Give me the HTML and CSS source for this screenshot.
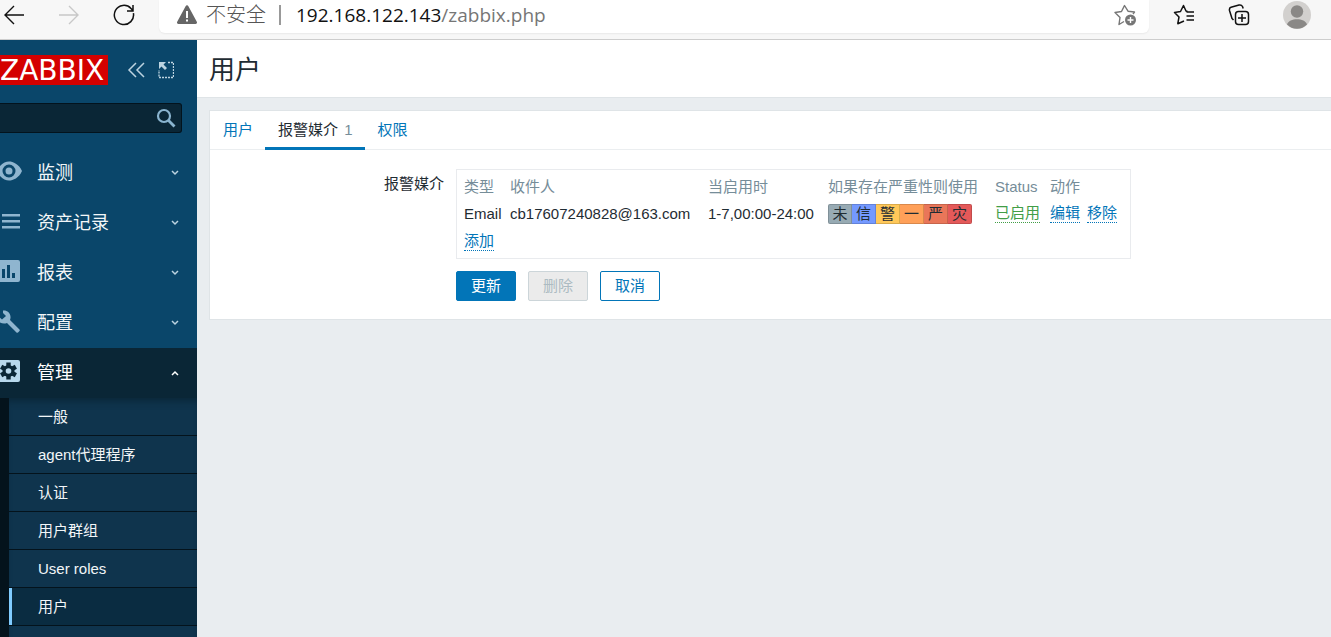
FILE: index.html
```html
<!DOCTYPE html>
<html lang="zh-CN">
<head>
    <meta charset="UTF-8">
    <meta name="viewport" content="width=device-width, initial-scale=1.0">
    <title>用户</title>
    <link rel="stylesheet" href="styles.css">
</head>
<body>
    <!-- Browser toolbar -->
    <header class="browser">
        <div class="browser-nav">
            <button type="button" aria-label="Back">
                <svg width="22" height="22" viewBox="0 0 22 22" fill="none" stroke="#111" stroke-width="1.4"><path d="M21 11H2M11 2L2 11l9 9"/></svg>
            </button>
            <button type="button" aria-label="Forward">
                <svg width="22" height="22" viewBox="0 0 22 22" fill="none" stroke="#c8c8c8" stroke-width="1.4"><path d="M1 11h19M11 2l9 9-9 9"/></svg>
            </button>
            <button type="button" aria-label="Refresh">
                <svg width="22" height="22" viewBox="0 0 22 22" fill="none" stroke="#111" stroke-width="1.5"><path d="M20.4 9.2A9.6 9.6 0 1 1 18 4.400l1.600 1.800M20 1v6h-6"/></svg>
            </button>
        </div>
        <div class="address">
            <svg width="22" height="20" viewBox="0 0 22 20"><path d="M9.6 1.2a1.6 1.6 0 0 1 2.8 0l8.4 15.6c.6 1-.1 2.2-1.3 2.2h-17c-1.2 0-1.9-1.2-1.3-2.2z" fill="#666"/><path d="M10 6h2v7h-2zM10 14.5h2v2h-2z" fill="#fff"/></svg>
            <span class="insecure">不安全</span>
            <span class="divider"></span>
            <span class="url"><b>192.168.122.143</b>/zabbix.php</span>
            <button type="button" class="favorite" aria-label="Add to favorites">
                <svg width="24" height="22" viewBox="0 0 24 22" fill="none" stroke="#767676" stroke-width="1.4" stroke-linejoin="round"><path d="M20 10l1.500-2-6.500-.8L11.500 1.500 8.500 7.500l-6.500 1 5 5-1 7 5-3"/><circle cx="17.500" cy="16" r="5.500" fill="#767676" stroke="none"/><path d="M17.500 13v6M14.500 16h6" stroke="#fff"/></svg>
            </button>
        </div>
        <div class="browser-tools">
            <button type="button" aria-label="Favorites">
                <svg width="22" height="22" viewBox="0 0 22 22" fill="none" stroke="#111" stroke-width="1.5" stroke-linejoin="round"><path d="M14.500 7.500L13 7 10.500 1.500 7.500 7.500l-6 1 4.500 4.500-1.200 6.700L11 17M13.500 8H21M13.500 12H21M13.500 16H21"/></svg>
            </button>
            <button type="button" aria-label="Collections">
                <svg width="22" height="22" viewBox="0 0 22 22" fill="none" stroke="#111" stroke-width="1.5" stroke-linejoin="round"><rect x="7.500" y="7.500" width="13" height="13" rx="3"/><path d="M14 10v8M10 14h8M5.500 16L4 14.500 1.500 6.500Q1 4 3 3.300l8-2.300q2.500-.5 3.500 1.500l.7 2"/></svg>
            </button>
            <button type="button" aria-label="Profile">
                <svg width="28" height="28" viewBox="0 0 28 28"><circle cx="14" cy="14" r="14" fill="#d2d0ce"/><circle cx="14" cy="10.500" r="6.200" fill="#8a8886"/><path d="M4 23.500c2-7 18-7 20 0a14 14 0 0 1-20 0z" fill="#8a8886"/></svg>
            </button>
        </div>
    </header>

    <div class="layout">
        <!-- Sidebar -->
        <aside class="sidebar">
            <div class="sidebar-header">
                <a href="#" class="logo">ZABBIX</a>
                <button type="button" aria-label="Collapse sidebar">
                    <svg width="20" height="18" viewBox="0 0 20 18" fill="none" stroke="#bcd3e0" stroke-width="1.5"><path d="M10 2L3 9l7 7M18 2l-7 7 7 7"/></svg>
                </button>
                <button type="button" aria-label="Hide sidebar">
                    <svg width="16" height="18" viewBox="0 0 16 18"><path d="M1 1h7L5.500 3.500 9 7 7 9 3.500 5.500 1 8z" fill="#bcd3e0"/><path d="M10 1.500h5.500V16.500H1V9" fill="none" stroke="#bcd3e0" stroke-width="1.3" stroke-dasharray="2 1"/></svg>
                </button>
            </div>

            <form class="search" role="search">
                <input type="text" aria-label="Search">
                <button type="button" aria-label="Search">
                    <svg width="20" height="20" viewBox="0 0 20 20" fill="none" stroke="#8ab4cf"><circle cx="8" cy="8" r="6" stroke-width="2.200"/><path d="M12.300 12.300L18.500 18.500" stroke-width="2.800"/></svg>
                </button>
            </form>

            <nav>
                <ul class="menu">
                    <li>
                        <a href="#">
                            <svg class="icon" width="22" height="24" viewBox="0 0 22 24"><path fill-rule="evenodd" d="M-3 11C0 4 5 1.500 9 1.500S19 4 22 11c-3 7-9 9.500-13 9.500S0 18 -3 11zM9 4.500a6.500 6.500 0 1 0 0 13 6.500 6.500 0 0 0 0-13zM9 7.500a3.500 3.500 0 1 1 0 7 3.500 3.500 0 0 1 0-7z"/></svg>
                            <span>监测</span>
                            <svg class="arrow" width="8" height="6" viewBox="0 0 8 6"><path d="M1 1l3 3 3-3"/></svg>
                        </a>
                    </li>
                    <li>
                        <a href="#">
                            <svg class="icon" width="22" height="24" viewBox="0 0 22 24"><path d="M2 4h18v2.500H2zM2 10h18v2.500H2zM2 16h18v2.500H2z"/></svg>
                            <span>资产记录</span>
                            <svg class="arrow" width="8" height="6" viewBox="0 0 8 6"><path d="M1 1l3 3 3-3"/></svg>
                        </a>
                    </li>
                    <li>
                        <a href="#">
                            <svg class="icon" width="22" height="24" viewBox="0 0 22 24"><path fill-rule="evenodd" d="M-2 0H18q2 0 2 2V20q0 2-2 2H-2zM2 9v9h3V9zM7 5v13h3V5zM12 13v5h3v-5z"/></svg>
                            <span>报表</span>
                            <svg class="arrow" width="8" height="6" viewBox="0 0 8 6"><path d="M1 1l3 3 3-3"/></svg>
                        </a>
                    </li>
                    <li>
                        <a href="#">
                            <svg class="icon" width="22" height="24" viewBox="0 0 22 24"><path d="M3 .5C7 0 11 3 10.500 8l-.5 2L19.500 19.500q.5 1 0 1.500L18 22.500q-1 .5-1.500 0L7 13Q3 14.500-1 12V7l3 2.500L6 6 3 3z"/></svg>
                            <span>配置</span>
                            <svg class="arrow" width="8" height="6" viewBox="0 0 8 6"><path d="M1 1l3 3 3-3"/></svg>
                        </a>
                    </li>
                    <li class="open">
                        <a href="#">
                            <svg class="icon" width="22" height="24" viewBox="0 0 22 24"><path d="M-2 0H18q2 0 2 2V20q0 2-2 2H-2z"/><g fill="#0a2636" transform="translate(8.500 11)"><circle r="6"/><rect x="-2.200" y="-8.500" width="4.400" height="17"/><rect x="-2.200" y="-8.500" width="4.400" height="17" transform="rotate(60)"/><rect x="-2.200" y="-8.500" width="4.400" height="17" transform="rotate(120)"/></g><circle cx="8.500" cy="11" r="2.800"/></svg>
                            <span>管理</span>
                            <svg class="arrow" width="8" height="6" viewBox="0 0 8 6"><path d="M1 5l3-3 3 3"/></svg>
                        </a>
                        <ul class="submenu">
                            <li><a href="#">一般</a></li>
                            <li><a href="#">agent代理程序</a></li>
                            <li><a href="#">认证</a></li>
                            <li><a href="#">用户群组</a></li>
                            <li><a href="#">User roles</a></li>
                            <li class="selected"><a href="#">用户</a></li>
                        </ul>
                    </li>
                </ul>
            </nav>
        </aside>

        <!-- Content -->
        <main class="content">
            <div class="page-title">
                <h1>用户</h1>
            </div>

            <form class="panel">
                <nav class="tabs">
                    <a href="#">用户</a>
                    <a href="#" class="active">报警媒介 <span>1</span></a>
                    <a href="#">权限</a>
                </nav>

                <div class="form-grid">
                    <div class="form-label" id="mediaLabel">报警媒介</div>
                    <div class="media-box">
                        <table aria-labelledby="mediaLabel">
                            <colgroup>
                                <col class="col-type">
                                <col class="col-send">
                                <col class="col-when">
                                <col class="col-severity">
                                <col class="col-status">
                                <col class="col-action">
                            </colgroup>
                            <thead>
                                <tr>
                                    <th>类型</th>
                                    <th>收件人</th>
                                    <th>当启用时</th>
                                    <th>如果存在严重性则使用</th>
                                    <th>Status</th>
                                    <th>动作</th>
                                </tr>
                            </thead>
                            <tbody>
                                <tr>
                                    <td>Email</td>
                                    <td>cb17607240828@163.com</td>
                                    <td>1-7,00:00-24:00</td>
                                    <td>
                                        <div class="severity">
                                            <span class="na">未</span>
                                            <span class="info">信</span>
                                            <span class="warning">警</span>
                                            <span class="average">一</span>
                                            <span class="high">严</span>
                                            <span class="disaster">灾</span>
                                        </div>
                                    </td>
                                    <td>
                                        <div class="actions">
                                            <button type="button" class="btn-link green">已启用</button>
                                        </div>
                                    </td>
                                    <td>
                                        <div class="actions">
                                            <button type="button" class="btn-link">编辑</button>
                                            <button type="button" class="btn-link">移除</button>
                                        </div>
                                    </td>
                                </tr>
                                <tr>
                                    <td colspan="6"><button type="button" class="btn-link">添加</button></td>
                                </tr>
                            </tbody>
                        </table>
                    </div>

                    <div class="buttons">
                        <button type="button" class="btn">更新</button>
                        <button type="button" class="btn" disabled>删除</button>
                        <button type="button" class="btn btn-alt">取消</button>
                    </div>
                </div>
            </form>
        </main>
    </div>
</body>
</html>
```
FILE: styles.css
```css
/* General */
* {
    box-sizing: border-box;
}

body {
    margin: 0;
    min-height: 100vh;
    display: flex;
    flex-direction: column;
    font-family: "Liberation Sans", "Noto Sans CJK SC", sans-serif;
    font-size: 15px;
    line-height: 20px;
    color: #1f2c33;
    background: #e9edf0;
}

button {
    font: inherit;
    margin: 0;
    padding: 0;
    border: none;
    background: none;
    cursor: pointer;
}

svg {
    display: block;
    flex: none;
}

a {
    color: #0275b8;
    text-decoration: none;
}

ul {
    list-style: none;
    margin: 0;
    padding: 0;
}

/* Browser toolbar */
.browser {
    display: flex;
    height: 40px;
    padding-bottom: 6px;
    background: #f7f7f7;
    border-bottom: 1px solid #cdcdcd;
}

.browser-nav,
.browser-tools {
    display: flex;
    align-items: center;
    padding-bottom: 3px;
}

.browser-nav {
    gap: 33px;
    padding-left: 3px;
    padding-right: 24px;
}

.browser-tools {
    gap: 33px;
    padding-left: 24px;
    padding-right: 20px;
}

.address {
    flex: 1;
    display: flex;
    align-items: center;
    padding: 0 12px 3px 17px;
    background: #fff;
    border-radius: 0 0 6px 6px;
    box-shadow: 0 1px 2px rgba(0, 0, 0, 0.06);
    font-family: "Open Sans", "Noto Sans CJK SC", sans-serif;
    font-size: 19px;
    color: #767676;
}

.insecure {
    margin-left: 8px;
    font-size: 20px;
    font-weight: 300;
    color: #555;
}

.divider {
    width: 2px;
    height: 20px;
    margin: 0 15px 0 13px;
    background: #999;
}

.url b {
    font-weight: normal;
    color: #111;
}

.favorite {
    margin-left: auto;
}

/* Sidebar */
.layout {
    flex: 1;
    display: flex;
}

.sidebar {
    width: 197px;
    flex: none;
    display: flex;
    flex-direction: column;
    background: #0a466a;
}

.sidebar nav,
.menu {
    flex: 1;
    display: flex;
    flex-direction: column;
}

.sidebar-header {
    display: flex;
    align-items: center;
    gap: 12px;
    padding: 15px 0 18px;
}

.logo {
    width: 108px;
    height: 30px;
    margin-right: 6px;
    background: #d40000;
    color: #fff;
    font: 28px/32px "DejaVu Sans", sans-serif;
}

.search {
    display: flex;
    align-items: center;
    height: 30px;
    margin-right: 15px;
    padding-right: 5px;
    background: #0a2636;
    border: 1px solid #03131d;
    border-left: none;
    border-radius: 0 3px 3px 0;
}

.search input {
    flex: 1;
    min-width: 0;
    height: 28px;
    padding: 0 8px;
    border: none;
    outline: none;
    background: none;
    color: #fff;
    font: inherit;
}

.menu {
    margin-top: 15px;
}

.menu > li > a {
    display: flex;
    align-items: center;
    height: 50px;
    padding-right: 18px;
    color: #f2f6f8;
    font-size: 18px;
}

.menu .icon {
    margin-right: 15px;
    margin-bottom: 2px;
    fill: #8fb5cf;
}

.menu .arrow {
    margin-left: auto;
    fill: none;
    stroke: #bcd3e0;
    stroke-width: 1.5;
}

.menu .open {
    flex: 1;
    display: flex;
    flex-direction: column;
    background: #04131c;
}

.menu .open > a {
    background: #0a2636;
    color: #fff;
}

.menu .open .icon {
    fill: #b8d8ec;
}

.menu .open .arrow {
    stroke: #fff;
}

.submenu {
    flex: 1;
    margin-left: 9px;
    background: #0f344d;
    box-shadow: inset 0 8px 8px -6px rgba(4, 19, 28, 0.5);
}

.submenu li {
    border-bottom: 1px solid #04131c;
}

.submenu a {
    display: block;
    padding: 9px 0 8px 29px;
    color: #f2f6f8;
}

.submenu .selected {
    background: #0a2c41;
}

.submenu .selected a {
    padding-left: 26px;
    border-left: 3px solid #80ccff;
}

/* Content */
.content {
    flex: 1;
    min-width: 0;
}

.page-title {
    padding: 14px 12px 10px;
    background: #fff;
    border-bottom: 1px solid #dfe4e7;
}

h1 {
    margin: 0;
    font-size: 26px;
    line-height: 33px;
    font-weight: normal;
}

.panel {
    margin: 12px 0 0 12px;
    background: #fff;
    border: 1px solid #dfe4e7;
    border-right: none;
}

.tabs {
    display: flex;
    border-bottom: 1px solid #ebeef0;
}

.tabs a {
    padding: 9px 12px 7px 13px;
    border-bottom: 3px solid transparent;
    margin-bottom: -1px;
}

.tabs .active {
    color: #1f2c33;
    border-color: #0275b8;
}

.tabs span {
    margin-left: 2px;
    color: #768d99;
}

.form-grid {
    display: grid;
    grid-template-columns: 234px 1fr;
    gap: 12px;
    padding: 19px 0 18px;
}

.form-label {
    padding-top: 5px;
    text-align: right;
}

.media-box {
    justify-self: start;
    padding: 3px 0 4px 7px;
    border: 1px solid #e9ebee;
}

table {
    table-layout: fixed;
    width: 666px;
    border-collapse: collapse;
}

th,
td {
    height: 27px;
    padding: 0;
    text-align: left;
    white-space: nowrap;
}

th {
    font-weight: normal;
    color: #768d99;
}

.col-type {
    width: 46px;
}

.col-send {
    width: 198px;
}

.col-when {
    width: 120px;
}

.col-severity {
    width: 167px;
}

.col-status {
    width: 55px;
}

.severity {
    display: flex;
}

.severity span {
    width: 24px;
    height: 20px;
    line-height: 18px;
    text-align: center;
    border: 1px solid rgba(0, 0, 0, 0.15);
    border-left-width: 0;
}

.severity span:first-child {
    border-left-width: 1px;
    border-radius: 2px 0 0 2px;
}

.severity span:last-child {
    border-radius: 0 2px 2px 0;
}

.na {
    background: #97aab3;
}

.info {
    background: #7499ff;
}

.warning {
    background: #ffc859;
}

.average {
    background: #ffa059;
}

.high {
    background: #e97659;
}

.disaster {
    background: #e45959;
}

.actions {
    display: flex;
    gap: 7px;
}

.btn-link {
    line-height: 18px;
    color: #0275b8;
    border-bottom: 1px dotted #0275b8;
}

.btn-link.green {
    color: #429e47;
    border-color: #429e47;
}

/* Buttons */
.buttons {
    grid-column: 2;
    display: flex;
    gap: 12px;
}

.btn {
    height: 30px;
    padding: 0 14px;
    border: 1px solid #0275b8;
    border-radius: 2px;
    background: #0275b8;
    color: #fff;
}

.btn:hover {
    background: #02659f;
}

.btn-alt {
    background: #fff;
    color: #0275b8;
}

.btn:disabled {
    background: #ebebeb;
    border-color: #ccd5d9;
    color: #acbbc2;
    cursor: default;
}
```
